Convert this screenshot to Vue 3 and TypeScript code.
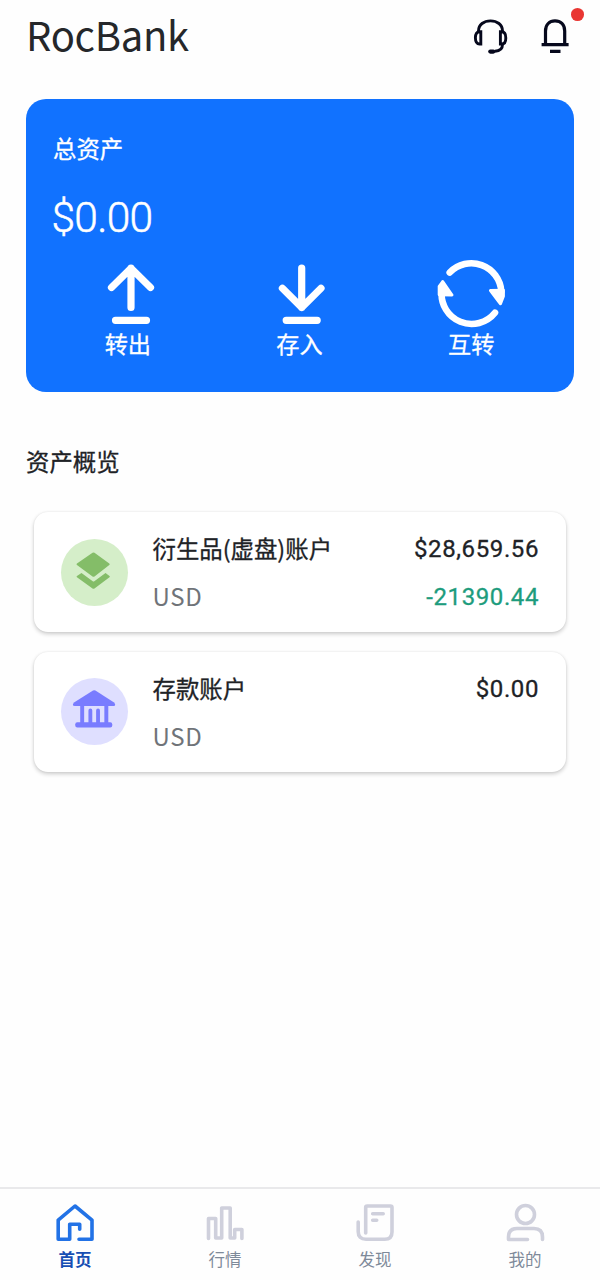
<script setup lang="ts">
interface Account {
  id: string
  name: string
  currency: string
  balance: string
  change?: string
}

const actions = [
  { id: 'out', label: '转出' },
  { id: 'in', label: '存入' },
  { id: 'swap', label: '互转' },
]

const accounts: Account[] = [
  { id: 'layers', name: '衍生品(虚盘)账户', currency: 'USD', balance: '$28,659.56', change: '-21390.44' },
  { id: 'bank', name: '存款账户', currency: 'USD', balance: '$0.00' },
]

const tabs = [
  { id: 'home', label: '首页' },
  { id: 'market', label: '行情' },
  { id: 'discover', label: '发现' },
  { id: 'mine', label: '我的' },
]
</script>

<template>
  <div class="screen">
    <header class="header">
      <h1 class="brand">RocBank</h1>
      <svg class="headset" viewBox="0 0 36 38" fill="none" stroke="currentColor" stroke-width="2.9">
        <path d="M5.5 14V13C5.5 6.5 11 2.9 17.5 2.9S29.5 6.5 29.5 13v1" />
        <path d="M7.8 13.8H6.5C3.8 13.8 2.4 16 2.4 19.8S3.8 26 6.5 26h1.3z" />
        <path d="M27.4 13.8h1.3c2.7 0 4.1 2.3 4.1 6.1S31.4 26 28.7 26h-1.3z" />
        <path d="M29.5 26.5c0 4-3 6.5-7.5 6.8" />
        <path d="M17.3 33.6h3" stroke-width="4.2" stroke-linecap="round" />
      </svg>
      <div class="bell-wrap">
        <svg class="bell" viewBox="0 0 28 36" fill="none" stroke="currentColor" stroke-width="3.2">
          <path d="M4.5 26.5V13C4.5 6.5 8.5 2.9 14 2.9S23.7 6.5 23.7 13v13.5" />
          <path d="M.6 26.6h27M9 33.3h10.5" />
        </svg>
        <span class="badge"></span>
      </div>
    </header>

    <section class="total">
      <div class="total-label">总资产</div>
      <div class="total-value">$0.00</div>
      <div class="actions">
        <div v-for="a in actions" :key="a.id" class="action">
          <svg class="action-icon" viewBox="0 0 72 72" fill="none" stroke="#fff" stroke-width="7.2" stroke-linecap="round" stroke-linejoin="round">
            <path v-if="a.id === 'out'" d="M39 51.5V12M19.5 31.5 39 12.2l19.5 19.3M23.500 64.300h31" />
            <path v-else-if="a.id === 'in'" d="M38.700 12v39.500M19.400 32.300 38.700 51.500l19.300-19.200M23.200 64.300h31" />
            <template v-else>
              <path d="M14.700 16.500A30 30 0 0 1 66.300 35.300M60 56.700A30 30 0 0 1 6.700 35.300" stroke-width="6.600" />
              <path d="M55.500 34.500 68.400 34.300V40.300L65.500 47.800 62.800 44.300zM7.700 25.600 4.200 30.300v8.500L17 39z" fill="#fff" stroke-width="3" />
            </template>
          </svg>
          <span>{{ a.label }}</span>
        </div>
      </div>
    </section>

    <h2 class="section-title">资产概览</h2>

    <div class="accounts">
      <article v-for="acc in accounts" :key="acc.id" class="account">
        <div class="avatar" :class="acc.id">
          <svg viewBox="0 0 68 68" fill="currentColor">
            <template v-if="acc.id === 'layers'">
              <path d="M32 14q1-.7 2 0l15 10.900q1 .8 0 1.600L34 38q-1 .7-2 0L16.200 26.500q-1-.8 0-1.600z" />
              <path d="m20.800 34.600 11.400 8.300q.8.600 1.600 0l11.400-8.300 4 2.900q.9.700 0 1.400L34 50.200q-1 .7-2 0L16.200 38.900q-.9-.7 0-1.400z" />
            </template>
            <template v-else>
              <path d="M32.500 12.800q1.200-.7 2.400 0l19 12q2.500 3.200-.5 3.600H14q-3.500-.4-.8-3.600z" />
              <path d="M19.500 27h4v19h-4zM44 27h4v19h-4z" />
              <path d="M29.800 33v13.500M37.600 33v13.500" stroke="currentColor" stroke-width="3.900" stroke-linecap="round" />
              <rect x="14.500" y="45" width="37.500" height="5.200" rx="2" />
            </template>
          </svg>
        </div>
        <div class="info">
          <div class="name">{{ acc.name }}</div>
          <div class="currency">{{ acc.currency }}</div>
        </div>
        <div class="figures">
          <div class="balance">{{ acc.balance }}</div>
          <div v-if="acc.change" class="change">{{ acc.change }}</div>
        </div>
      </article>
    </div>

    <nav class="tabs">
      <div v-for="t in tabs" :key="t.id" class="tab" :class="{ active: t.id === 'home' }">
        <svg viewBox="0 0 40 40" fill="none" stroke="currentColor" stroke-width="3.600" stroke-linecap="round" stroke-linejoin="round">
          <path v-if="t.id === 'home'" d="M24 37.300h13V18.200L20 4 3.200 18.200v19.100h11.500v-15h10v5" />
          <path v-else-if="t.id === 'market'" d="M3.500 36.500v-20h7.200V36h6V6h8.500v30h4.500v-8.500h7.200v9" />
          <path v-else-if="t.id === 'discover'" d="M10.700 31V5.500q0-1.500 1.500-1.500H35.500q1.500 0 1.500 1.500V30q0 7.300-7.300 7.300H11q-7.800 0-7.800-7.800V20M17.700 11.700h10.500M17.700 18.200h4" />
          <g v-else>
            <circle cx="20.500" cy="12.500" r="9" />
            <path d="M22.500 37.500H3.500v-2.500q0-8.500 8.500-8.500h17q8.500 0 8.500 8.500v2.500" />
          </g>
        </svg>
        <span>{{ t.label }}</span>
      </div>
    </nav>
  </div>
</template>

<style>
body {
  margin: 0;
  background: #fefefe;
}
</style>

<style scoped>
.screen {
  display: flex;
  flex-direction: column;
  box-sizing: border-box;
  width: 600px;
  height: 1280px;
  overflow: hidden;
  background: #fefefe;
  color: #202226;
  font-family: "Noto Sans CJK SC", sans-serif;
  white-space: nowrap;
}
.header {
  display: flex;
  align-items: flex-start;
  height: 99px;
  color: #06081c;
}
.brand {
  flex: 1;
  margin: 5px 0 0 26px;
  font-size: 40px;
  line-height: 58px;
  font-weight: 400;
  letter-spacing: -0.3px;
  color: #25272a;
}
.headset {
  width: 36px;
  height: 38px;
  margin: 18px 32px 0 0;
}
.bell-wrap {
  position: relative;
  width: 28px;
  height: 36px;
  margin: 18px 31px 0 0;
}
.bell {
  display: block;
  width: 28px;
  height: 36px;
}
.badge {
  position: absolute;
  top: -10px;
  right: -15px;
  width: 13.5px;
  height: 13px;
  border-radius: 50%;
  background: #e93632;
}
.total {
  box-sizing: border-box;
  height: 293px;
  margin: 0 26px;
  padding: 32px 17px 0 16px;
  border-radius: 20px;
  background: #1172ff;
  color: #fff;
}
.total-label {
  padding-left: 11px;
  font-size: 23.4px;
  line-height: 34px;
  -webkit-text-stroke: 0.3px currentColor;
}
.total-value {
  padding-left: 9.5px;
  margin-top: 23px;
  font-family: Roboto, sans-serif;
  font-size: 42.5px;
  line-height: 60px;
  font-weight: 300;
  letter-spacing: -0.7px;
  -webkit-text-stroke: 0.5px currentColor;
}
.actions {
  display: grid;
  grid-template-columns: repeat(3, 1fr);
  margin-top: 8px;
}
.action {
  display: flex;
  flex-direction: column;
  align-items: center;
  font-size: 23.2px;
  line-height: 30px;
  -webkit-text-stroke: 0.3px currentColor;
}
.action-icon {
  width: 72px;
  height: 72px;
}
.section-title {
  margin: 52px 26px 0;
  font-size: 23.4px;
  line-height: 34px;
  font-weight: 400;
  -webkit-text-stroke: 0.3px currentColor;
}
.accounts {
  display: flex;
  flex-direction: column;
  gap: 19.5px;
  margin: 34px 34px 0;
}
.account {
  display: flex;
  box-sizing: border-box;
  height: 120px;
  padding: 0 27px;
  border-radius: 14px;
  background: #fff;
  box-shadow: 0 2px 4px rgba(0, 0, 0, 0.2), 0 0 2px rgba(0, 0, 0, 0.08);
}
.avatar {
  width: 67px;
  height: 67px;
  margin-top: 26.5px;
  border-radius: 50%;
}
.avatar svg {
  display: block;
  width: 67px;
  height: 67px;
}
.layers {
  background: #d5eec9;
  color: #84bd68;
}
.bank {
  background: #dfdfff;
  color: #797cff;
}
.info {
  flex: 1;
  margin: 19px 0 0 24.5px;
}
.name {
  font-size: 23.4px;
  line-height: 34px;
  -webkit-text-stroke: 0.3px currentColor;
}
.currency {
  margin-top: 14px;
  font-size: 24px;
  line-height: 34px;
  letter-spacing: 0.7px;
  color: #707479;
}
.figures {
  margin-top: 20px;
  text-align: right;
  font-family: Roboto, sans-serif;
  font-size: 24px;
  line-height: 34px;
  letter-spacing: 0.6px;
  -webkit-text-stroke: 0.3px currentColor;
}
.change {
  margin-top: 14px;
  color: #1d9c7d;
}
.tabs {
  display: grid;
  grid-template-columns: repeat(4, 1fr);
  box-sizing: border-box;
  height: 93px;
  margin-top: auto;
  padding-top: 13px;
  border-top: 2px solid #e9e9eb;
}
.tab {
  display: flex;
  flex-direction: column;
  align-items: center;
  font-size: 16.5px;
  line-height: 24px;
  color: #7e8a9a;
}
.tab svg {
  width: 40px;
  height: 40px;
  margin-bottom: 5px;
  color: #cfd0dc;
}
.tab.active {
  color: #174eb3;
  font-weight: 700;
}
.tab.active svg {
  color: #2272e6;
}
</style>
